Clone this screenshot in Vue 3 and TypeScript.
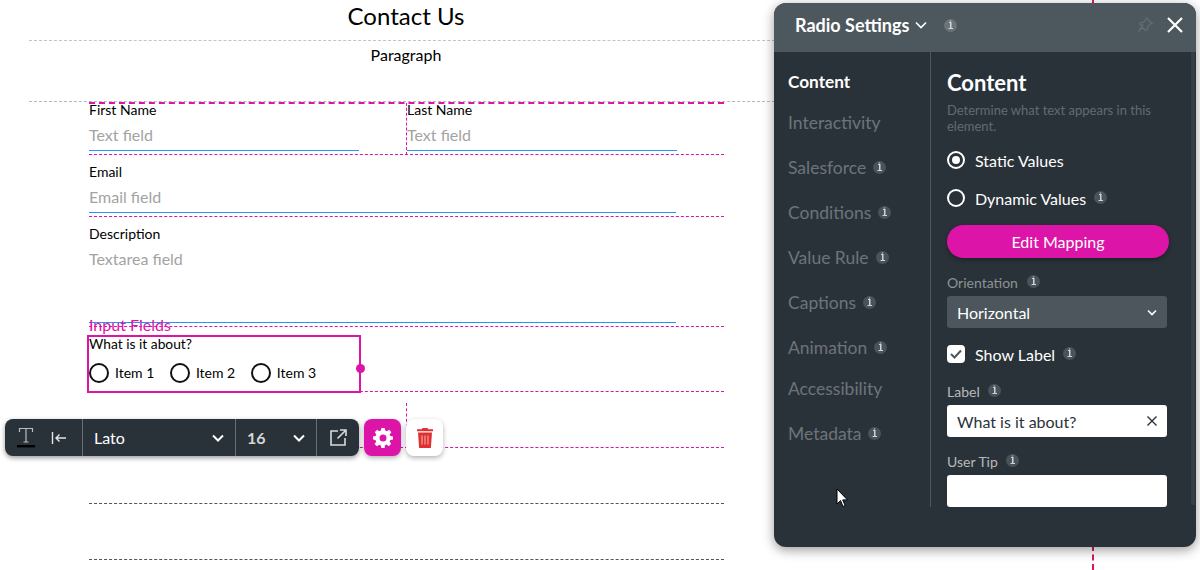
<script setup lang="ts">
interface NavItem { name: string; info: boolean; active?: boolean }
const nav: NavItem[] = [
  { name: 'Content', info: false, active: true },
  { name: 'Interactivity', info: false },
  { name: 'Salesforce', info: true },
  { name: 'Conditions', info: true },
  { name: 'Value Rule', info: true },
  { name: 'Captions', info: true },
  { name: 'Animation', info: true },
  { name: 'Accessibility', info: false },
  { name: 'Metadata', info: true },
]
const items = ['Item 1', 'Item 2', 'Item 3']
</script>

<template>
  <div class="page">
    <div class="canvas">
      <h1 class="title">Contact Us</h1>
      <p class="para">Paragraph</p>
      <div class="form">
        <div class="row r1">
          <div class="col">
            <div class="lbl">First Name</div>
            <div class="ph">Text field</div>
            <div class="line short"></div>
          </div>
          <div class="col second">
            <div class="lbl">Last Name</div>
            <div class="ph">Text field</div>
            <div class="line short"></div>
          </div>
        </div>
        <div class="row r2">
          <div class="lbl">Email</div>
          <div class="ph">Email field</div>
          <div class="line"></div>
        </div>
        <div class="row r3">
          <div class="lbl">Description</div>
          <div class="ph">Textarea field</div>
          <div class="line ta"></div>
          <span class="tag">Input Fields</span>
        </div>
        <div class="row r4">
          <div class="selected">
            <div class="q">What is it about?</div>
            <div class="radios">
              <label v-for="it in items" :key="it" class="radio"><i class="ring"></i>{{ it }}</label>
            </div>
            <i class="handle"></i>
          </div>
        </div>
        <div class="row r5"><i class="vdash"></i></div>
        <div class="row r6"></div>
        <div class="row r6"></div>
      </div>
    </div>

    <i class="guide top"></i>
    <i class="guide bottom"></i>

    <div class="toolbar">
      <div class="bar">
        <div class="seg tools">
          <span class="t-btn">
            <svg width="18" height="22" viewBox="0 0 18 22"><path d="M2.500 5V1.500h13V5M9 1.500V15M6.500 15h5" fill="none" stroke="#b9bec1" stroke-width="1.200"/><rect x="0" y="18" width="18" height="2.400" fill="#000"/></svg>
          </span>
          <svg width="16" height="12" viewBox="0 0 16 12"><path d="M1.500 0v12M15 6H5M8.500 2.500 5 6l3.500 3.500" fill="none" stroke="#e4e6e7" stroke-width="1.400"/></svg>
        </div>
        <div class="seg font"><span>Lato</span><svg class="chev" width="12" height="8" viewBox="0 0 12 8"><path d="M1 1.500 6 6.500l5-5" fill="none" stroke="#fff" stroke-width="2"/></svg></div>
        <div class="seg size"><span>16</span><svg class="chev" width="12" height="8" viewBox="0 0 12 8"><path d="M1 1.500 6 6.500l5-5" fill="none" stroke="#fff" stroke-width="2"/></svg></div>
        <div class="seg ext">
          <svg width="17" height="17" viewBox="0 0 17 17"><path d="M8 2H1v14h14V9M10 1h6v6M16 1 7.500 9.500" fill="none" stroke="#d9dbdc" stroke-width="1.600"/></svg>
        </div>
      </div>
      <button class="gear">
        <svg width="20" height="20" viewBox="0 0 24 24"><path fill="#fff" fill-rule="evenodd" d="M10 1h4l.6 3.100c.7.2 1.400.5 2 .9l2.700-1.800 2.800 2.800L19.900 8.700c.4.600.7 1.300.9 2L24 11.300v3.400l-3.200.6c-.2.700-.5 1.400-.9 2l1.900 2.700-2.800 2.800-2.700-1.900c-.6.400-1.300.7-2 .9L14 25h-4l-.6-3.100c-.7-.2-1.400-.5-2-.9l-2.700 1.900-2.800-2.800 1.900-2.700c-.4-.6-.7-1.300-.9-2L0 14.700v-3.400l3.100-.6c.2-.7.5-1.400.9-2L2.100 6 4.900 3.200 7.600 5c.6-.4 1.300-.7 2-.9L10 1Zm2 7.800a4.200 4.200 0 1 0 0 8.400 4.200 4.200 0 0 0 0-8.400Z" transform="translate(0 -1)"/></svg>
      </button>
      <button class="trash">
        <svg width="16" height="20" viewBox="0 0 16 20"><path fill="#e03131" d="M5.500 0h5l.6 1.300H16v2H0v-2h4.900L5.500 0ZM1 4.500h14L13.900 20H2.100L1 4.500Z"/><path d="M5 7.500v9M8 7.500v9M11 7.500v9" stroke="#f6b5b5" stroke-width="1"/></svg>
      </button>
    </div>

    <aside class="panel">
      <header class="head">
        <span class="head-title">Radio Settings</span>
        <svg class="head-chev" width="12" height="8" viewBox="0 0 12 8"><path d="M1 1.500 6 6.500l5-5" fill="none" stroke="#fff" stroke-width="1.600"/></svg>
        <svg class="info" width="13" height="13" viewBox="0 0 13 13"><circle cx="6.500" cy="6.500" r="6.500" fill="#6a7479"/><path d="M5 3h2.500v6H9v1H4.500V9H6V4H5zM5.800 1.600h1.400v1H5.800z" fill="#d4d7d9"/></svg>
        <span class="head-space"></span>
        <svg width="16" height="16" viewBox="0 0 16 16"><path d="M9.500 1 15 6.500l-1.500.4-3 3-.4 3L7.800 13 5 10.200 1.500 14.500 5.800 8.200 3 8l.2-2.200 3-.4 3-3z" fill="none" stroke="#626d72" stroke-width="1.300"/></svg>
        <svg class="close" width="16" height="16" viewBox="0 0 16 16"><path d="M1 1l14 14M15 1 1 15" stroke="#fff" stroke-width="2.200"/></svg>
      </header>
      <div class="body">
        <nav class="nav">
          <div v-for="n in nav" :key="n.name" class="nav-item" :class="{ active: n.active, tall: n.info }">
            <span>{{ n.name }}</span>
            <svg v-if="n.info" class="info" width="13" height="13" viewBox="0 0 13 13"><circle cx="6.500" cy="6.500" r="6.500" fill="#4a5359"/><path d="M5 3h2.500v6H9v1H4.500V9H6V4H5zM5.800 1.600h1.400v1H5.800z" fill="#cfd3d5"/></svg>
          </div>
        </nav>
        <section class="content">
          <h2 class="c-title">Content</h2>
          <p class="c-desc">Determine what text appears in this element.</p>
          <div class="opt first"><i class="p-radio on"></i><span>Static Values</span></div>
          <div class="opt second-opt"><i class="p-radio"></i><span>Dynamic Values</span>
            <svg class="info" width="13" height="13" viewBox="0 0 13 13"><circle cx="6.500" cy="6.500" r="6.500" fill="#4a5359"/><path d="M5 3h2.500v6H9v1H4.500V9H6V4H5zM5.800 1.600h1.400v1H5.800z" fill="#cfd3d5"/></svg>
          </div>
          <button class="map">Edit Mapping</button>
          <div class="f-label orient">Orientation
            <svg class="info" width="13" height="13" viewBox="0 0 13 13"><circle cx="6.500" cy="6.500" r="6.500" fill="#4a5359"/><path d="M5 3h2.500v6H9v1H4.500V9H6V4H5zM5.800 1.600h1.400v1H5.800z" fill="#cfd3d5"/></svg>
          </div>
          <div class="select"><span>Horizontal</span><svg width="10" height="7" viewBox="0 0 10 7"><path d="M1 1.500 5 5.500l4-4" fill="none" stroke="#fff" stroke-width="1.600"/></svg></div>
          <div class="opt show"><i class="check"><svg width="12" height="10" viewBox="0 0 12 10"><path d="M1 5l3.500 3.500L11 1.500" fill="none" stroke="#4c565c" stroke-width="2"/></svg></i><span>Show Label</span>
            <svg class="info" width="13" height="13" viewBox="0 0 13 13"><circle cx="6.500" cy="6.500" r="6.500" fill="#4a5359"/><path d="M5 3h2.500v6H9v1H4.500V9H6V4H5zM5.800 1.600h1.400v1H5.800z" fill="#cfd3d5"/></svg>
          </div>
          <div class="f-label lab">Label
            <svg class="info" width="13" height="13" viewBox="0 0 13 13"><circle cx="6.500" cy="6.500" r="6.500" fill="#4a5359"/><path d="M5 3h2.500v6H9v1H4.500V9H6V4H5zM5.800 1.600h1.400v1H5.800z" fill="#cfd3d5"/></svg>
          </div>
          <div class="input first-input"><span>What is it about?</span><svg width="10" height="10" viewBox="0 0 10 10"><path d="M.5.500l9 9M9.500.500l-9 9" stroke="#2a3239" stroke-width="1.400"/></svg></div>
          <div class="f-label tip">User Tip
            <svg class="info" width="13" height="13" viewBox="0 0 13 13"><circle cx="6.500" cy="6.500" r="6.500" fill="#4a5359"/><path d="M5 3h2.500v6H9v1H4.500V9H6V4H5zM5.800 1.600h1.400v1H5.800z" fill="#cfd3d5"/></svg>
          </div>
          <div class="input last-input"></div>
        </section>
        <div class="scroll"></div>
      </div>
      <svg class="cursor" width="13" height="20" viewBox="0 0 13 20"><path d="M1 1v15l3.500-3.400L7 18.500l2.200-1-2.500-5.600H11.500Z" fill="#fff" stroke="#000" stroke-width="1"/></svg>
    </aside>
  </div>
</template>

<style>
html, body { margin: 0; background: #fff; }
</style>

<style scoped>
.page {
  position: relative;
  width: 1200px;
  height: 570px;
  overflow: hidden;
  background: #fff;
  font-family: Lato, "Liberation Sans", sans-serif;
  color: #000;
}
.canvas { margin-left: 29px; width: 771px; }
.title {
  margin: 0;
  height: 40px;
  font-size: 24px;
  font-weight: 400;
  line-height: 31px;
  text-align: center;
  border-bottom: 1px dashed #c4c4c4;
  text-indent: -17px;
}
.para {
  margin: 0;
  height: 60px;
  font-size: 16px;
  line-height: 28px;
  text-align: center;
  text-indent: -17px;
  border-bottom: 1px dashed #b8b8b8;
}
.form { margin-left: 60px; width: 635px; border-top: 2px dashed #dd14a8; }
.row { position: relative; box-sizing: border-box; border-bottom: 1px dashed #dd14a8; }
.r1 { display: flex; height: 51px; }
.r2 { height: 62px; padding-top: 10px; }
.r3 { height: 110px; padding-top: 10px; }
.r4 { height: 65px; }
.r5 { height: 56px; }
.r6 { height: 56px; border-bottom-color: #555; }
.col { width: 270px; margin-top: -1px; }
.col.second { width: 270px; margin-left: 47px; padding-left: 1px; position: relative; }
.col.second::before {
  content: "";
  position: absolute;
  left: 0;
  top: 0;
  bottom: -1px;
  border-left: 1px dashed #dd14a8;
}
.lbl { font-size: 14px; line-height: 14px; height: 14px; }
.ph { font-size: 16px; line-height: 20px; color: #a3a3a3; margin-top: 8px; }
.line { height: 1px; background: #2196f3; margin-top: 5px; width: 587px; }
.line.short { width: 270px; }
.line.ta { margin-top: 53px; }
.tag {
  position: absolute;
  left: 0;
  bottom: -9px;
  font-size: 16px;
  line-height: 20px;
  color: #dd14a8;
}
.selected {
  position: absolute;
  left: -2px;
  top: 8px;
  width: 274px;
  height: 58px;
  box-sizing: border-box;
  border: 2px solid #dd14a8;
}
.q { font-size: 13.8px; line-height: 14px; }
.radios { display: flex; gap: 15.6px; margin-top: 12px; }
.radio { display: flex; align-items: center; font-size: 14px; line-height: 20px; }
.ring {
  width: 20px;
  height: 20px;
  box-sizing: border-box;
  border: 2px solid #111;
  border-radius: 50%;
  margin-right: 6px;
}
.handle {
  position: absolute;
  right: -6px;
  top: 27px;
  width: 9px;
  height: 9px;
  border-radius: 50%;
  background: #dd14a8;
}
.vdash {
  position: absolute;
  left: 317px;
  top: 11px;
  height: 45px;
  border-left: 1px dashed #dd14a8;
}
.guide { position: absolute; left: 1092px; width: 0; border-left: 2px dashed #e0175f; }
.guide.top { top: 0; height: 5px; }
.guide.bottom { top: 545px; height: 25px; }

.toolbar { position: absolute; left: 5px; top: 419px; display: flex; gap: 5px; }
.bar {
  display: flex;
  width: 354px;
  height: 37px;
  background: #2a3239;
  border-radius: 8px;
  box-shadow: 0 2px 5px rgba(0,0,0,.4);
  color: #fff;
}
.seg { display: flex; align-items: center; box-sizing: border-box; height: 37px; border-right: 1px solid #687075; }
.tools { width: 78px; padding-left: 12px; gap: 16px; }
.t-btn { display: flex; height: 22px; }
.font { width: 153px; padding: 0 11px; justify-content: space-between; font-size: 16px; }
.size { width: 81px; padding: 0 11px; justify-content: space-between; font-size: 16px; color: #d4d6d8; font-weight: 700; }
.ext { width: 42px; border-right: 0; justify-content: center; }
.gear, .trash {
  width: 37px;
  height: 37px;
  padding: 0;
  border: 0;
  border-radius: 8px;
  display: flex;
  align-items: center;
  justify-content: center;
  box-shadow: 0 2px 5px rgba(0,0,0,.3);
}
.gear { background: #dd14a8; }
.trash { background: #fff; }

.panel {
  position: absolute;
  left: 774px;
  top: 3px;
  width: 422px;
  height: 544px;
  background: #2a3239;
  border-radius: 12px;
  box-shadow: 0 3px 12px rgba(0,0,0,.4);
  color: #fff;
  display: flex;
  flex-direction: column;
  overflow: hidden;
}
.head {
  display: flex;
  align-items: center;
  height: 49px;
  flex: none;
  background: #4c585e;
  padding: 0 13px 5px 21px;
  box-sizing: border-box;
}
.head-title { font-size: 18px; font-weight: 700; }
.head-chev { margin-left: 6px; }
.head .info { margin-left: 17px; margin-top: 0; }
.head-space { flex: 1; }
.close { margin-left: 14px; }
.body { display: flex; flex: 1; position: relative; }
.nav { width: 157px; height: 455px; border-right: 1px solid #4c565c; padding-top: 10px; box-sizing: border-box; }
.nav-item {
  display: flex;
  align-items: flex-end;
  height: 41px;
  padding-left: 14px;
  font-size: 17.5px;
  line-height: 41px;
  color: #6d7479;
}
.nav-item.tall { height: 45px; }
.nav-item .info { margin: 0 0 14px 7px; }
.nav-item.active { color: #fff; font-weight: 700; font-size: 17.2px; height: 40px; }
.content { width: 220px; margin-left: 16px; padding-top: 18px; }
.c-title { margin: 0; font-size: 22px; line-height: 26px; font-weight: 700; }
.c-desc { margin: 6px 0 0; font-size: 13px; line-height: 16px; color: #616b71; }
.opt { display: flex; align-items: center; font-size: 16px; height: 20px; }
.opt .info { margin-left: 8px; margin-top: -2px; }
.first { margin-top: 16px; }
.second-opt { margin-top: 18px; }
.p-radio {
  width: 18px;
  height: 18px;
  box-sizing: border-box;
  border: 2px solid #fff;
  border-radius: 50%;
  margin-right: 10px;
  position: relative;
}
.p-radio.on::after {
  content: "";
  position: absolute;
  left: 3px;
  top: 3px;
  width: 8px;
  height: 8px;
  border-radius: 50%;
  background: #fff;
}
.map {
  display: block;
  width: 222px;
  height: 33px;
  margin-top: 17px;
  border: 0;
  border-radius: 17px;
  background: #dd14a8;
  color: #fff;
  font: 16px Lato, "Liberation Sans", sans-serif;
  box-shadow: 0 2px 5px rgba(0,0,0,.35);
}
.f-label { display: flex; align-items: center; font-size: 14px; line-height: 18px; color: #b6babd; }
.f-label .info { margin-left: 8px; margin-top: -4px; }
.orient { margin-top: 16px; color: #8d9396; }
.orient .info { margin-left: 9px; }
.select {
  display: flex;
  align-items: center;
  justify-content: space-between;
  width: 220px;
  height: 32px;
  margin-top: 4px;
  padding: 0 10px;
  box-sizing: border-box;
  background: #4c565c;
  border-radius: 3px;
  font-size: 16px;
}
.show { margin-top: 16px; }
.check {
  width: 18px;
  height: 18px;
  border-radius: 4px;
  background: #fff;
  margin-right: 10px;
  display: flex;
  align-items: center;
  justify-content: center;
}
.lab { margin-top: 19px; }
.input {
  display: flex;
  align-items: center;
  justify-content: space-between;
  width: 220px;
  height: 32px;
  padding: 0 10px;
  box-sizing: border-box;
  background: #fff;
  border-radius: 3px;
  color: #2a3239;
  font-size: 16px;
}
.first-input { margin-top: 4px; }
.last-input { margin-top: 4px; }
.tip { margin-top: 16px; }
.scroll {
  position: absolute;
  right: 1px;
  top: 0;
  width: 4px;
  height: 453px;
  background: #353e44;
}
.cursor { position: absolute; left: 62px; top: 485px; }
</style>
